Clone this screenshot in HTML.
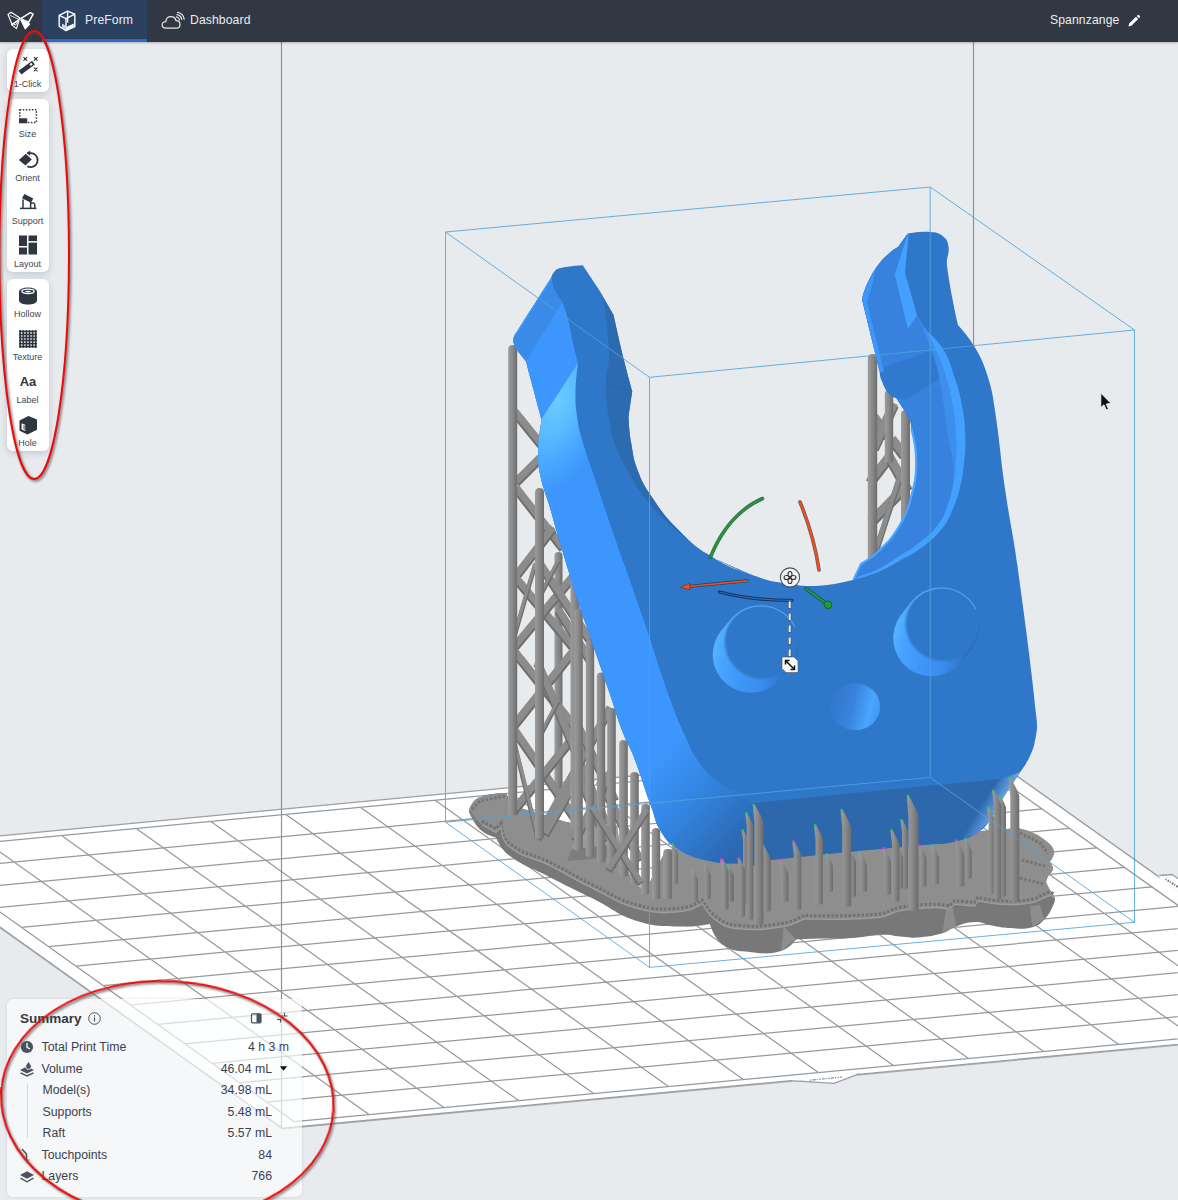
<!DOCTYPE html><html><head><meta charset="utf-8"><title>PreForm</title><style>
*{box-sizing:border-box;margin:0;padding:0}
html,body{width:1178px;height:1200px;overflow:hidden}
body{background:#e8ebee;font-family:"Liberation Sans",sans-serif;position:relative;color:#3a4250}
#scene{position:absolute;left:0;top:0;width:1178px;height:1200px}
#hdr{position:absolute;left:0;top:0;width:1178px;height:41.5px;background:#323843;box-shadow:0 1px 2px rgba(0,0,0,.25)}
#hdr .tab{position:absolute;left:42px;top:0;width:105px;height:41.5px;background:#2c4060;border-bottom:3px solid #2f68d2}
#hdr .t{position:absolute;top:13px;font-size:12.2px;line-height:15px;color:#e9ecf0;letter-spacing:.1px;white-space:nowrap}
.tb{position:absolute;left:6.5px;width:42.5px;background:#fff;border-radius:6px;box-shadow:0 2px 7px rgba(40,50,60,.2)}
.tl{position:absolute;left:-9px;width:60px;text-align:center;font-size:9px;line-height:10px;color:#3d4552;white-space:nowrap}
.ti{position:absolute;left:0;width:42px}
#sum{position:absolute;left:7px;top:999px;width:295px;height:198px;background:rgba(252,253,253,.66);border-radius:6px;box-shadow:0 0 3px rgba(60,70,80,.15)}
#sum .h{position:absolute;left:13px;top:12px;font-size:13.5px;font-weight:bold;color:#333a45;line-height:16px}
#sum .r{position:absolute;left:0;width:295px;height:20px;font-size:12.3px;line-height:20px;color:#3a4250}
#sum .r .l{position:absolute;left:34.5px;top:0;white-space:nowrap}
#sum .r .l2{position:absolute;left:35.5px;top:0;white-space:nowrap}
#sum .r .v{position:absolute;right:30px;top:0;white-space:nowrap}
#sum .r .ic{position:absolute;left:12px;top:2px;width:16px;height:16px}
#ann{position:absolute;left:0;top:0;width:1178px;height:1200px;pointer-events:none}
</style></head><body><svg id="scene" viewBox="0 0 1178 1200">
<defs><linearGradient id="gp" x1="0" x2="1" y1="0" y2="0"><stop offset="0" stop-color="#9c9c9c"/><stop offset=".45" stop-color="#8b8b8b"/><stop offset="1" stop-color="#6c6c6c"/></linearGradient></defs>
<polygon points="-113.1,846.6 282.4,1128.3 1370,1026.4 1370,1027.7 282.4,1129.6 -113.1,847.9" fill="#b3b6bb" />
<polygon points="-113.1,846.6 971.5,743.9 1370,1026.4 282.4,1128.3" fill="#ffffff" />
<polyline points="-113.1,846.6 971.5,743.9 1370,1026.4 282.4,1128.3 -113.1,846.6" fill="none" stroke="#9b9ea4" stroke-width="1.4" />
<polygon points="789.4,1079.5 834.2,1083.3 859.6,1072.6" fill="#ffffff" />
<polyline points="792,1080.2 857,1073.9" fill="none" stroke="#ffffff" stroke-width="2.6" />
<polyline points="789.4,1080.6 834.2,1083.3 859.6,1073.6" fill="none" stroke="#9b9ea4" stroke-width="1.3" />
<polyline points="810,1080.2 842,1077" fill="none" stroke="#555" stroke-width="1.1" stroke-dasharray="1.5 1.2 3 1 1 1.5" stroke-opacity=".8"/>
<polygon points="1158.5,876 1172,874.5 1179,879.2 1179,892 1160,878" fill="#ffffff" />
<polyline points="1161,877.8 1179,889.8" fill="none" stroke="#ffffff" stroke-width="3" />
<polyline points="1159.3,875.5 1172,874.5 1179,879.2" fill="none" stroke="#9b9ea4" stroke-width="1.3" />
<polyline points="1165.5,879 1178,887" fill="none" stroke="#444" stroke-width="2" stroke-dasharray="1 1.4 1.8 1" stroke-opacity=".75"/>
<path d="M-87.6 849.7L294.3 1121.7M-87.6 849.7L959.6 750.5M-13.1 842.6L369 1114.6M-60.4 869.1L987 770M61.5 835.6L443.8 1107.6M-33.2 888.5L1014.5 789.4M136.2 828.5L518.7 1100.6M-5.9 907.9L1041.9 808.9M210.9 821.4L593.6 1093.6M21.4 927.3L1069.4 828.4M285.6 814.3L668.5 1086.6M48.6 946.7L1096.8 847.8M360.3 807.3L743.4 1079.6M75.9 966.1L1124.3 867.3M435.1 800.2L818.4 1072.5M103.2 985.6L1151.8 886.8M509.9 793.1L893.4 1065.5M130.5 1005L1179.3 906.3M584.8 786L968.5 1058.5M157.7 1024.4L1206.8 925.8M659.7 778.9L1043.6 1051.4M185 1043.9L1234.2 945.2M734.6 771.8L1118.7 1044.4M212.3 1063.3L1261.7 964.7M809.6 764.7L1193.8 1037.3M239.6 1082.8L1289.2 984.2M884.6 757.6L1269 1030.3M267 1102.2L1316.8 1003.7M959.6 750.5L1344.3 1023.3M294.3 1121.7L1344.3 1023.3" fill="none" stroke="#96999f" stroke-width="1.25"/>
<path d="M281.5 41 V1127.5" stroke="#8f9398" stroke-width="1.2"/><path d="M973.5 41 V348" stroke="#8f9398" stroke-width="1.2"/>
<path d="M469.3 809.5C469.3 809.5 472.1 800.7 478 798C489.7 792.8 506 793 506 793C506 793 513 806 513 806C513 806 530.6 810.9 545 815C557.2 818.5 559.5 821 572 823C584.4 825 587.5 822.1 600 824C608 825.2 617 830 617 830C617 830 620 845.7 624 858C627.6 869.1 627.4 872.4 634 882C637.7 887.3 646 890 646 890C646 890 651 880.1 655 872C660 862.1 666 850 666 850C666 850 700 846 700 846C700 846 1000 830 1000 830C1000 830 1015.4 828 1015.4 828C1015.4 828 1023.2 828.9 1029 831.3C1036.3 834.3 1038 835 1044.3 839.8C1049.2 843.6 1051.2 844.3 1053.6 850C1055.1 853.6 1053.3 854.8 1052 858.5C1051.4 860.3 1049.4 861.9 1049.4 861.9C1049.4 861.9 1053.2 865.3 1052.8 868.7C1052.3 873.1 1049.7 873.1 1047.7 877C1046.6 879.1 1046 882 1046 882C1046 882 1047.7 885.9 1049.4 889C1051.5 892.9 1053.3 893.2 1054.5 897.5C1055.3 900.5 1054.9 901.5 1053.6 904.3C1050.2 911.6 1049.8 913.7 1044.3 919.6C1040 924.3 1038.6 925.7 1032.4 927.2C1022 929.7 1019.4 928.4 1008.7 928C1001 927.7 999.3 926.8 991.7 925.5C984 924.1 982.5 921.8 974.7 922C966.1 922.2 964.2 923.6 956 926.4C949.5 928.6 949 931.3 942.4 933.2C931.2 936.3 928.5 936.5 917 937.4C909.4 938 907.6 937.3 900 936.6C892.3 935.9 890.7 934.3 883 934.5C869 934.9 866 937.1 852 938C836.7 939 833.3 938.2 818 938.6C808.1 938.9 796 939.5 796 939.5C796 939.5 789.2 948.8 781 951C767.5 954.7 763.9 953.5 750 952C737.3 950.6 733.1 951.8 722.7 944.5C713.8 938.3 710 924 710 924C710 924 696 927 684.5 926.6C663.7 925.9 658.5 927.6 638.6 921.5C616.6 914.8 613.4 908.9 592.8 898.6C572.2 888.3 567.5 886.3 547 875.7C529.7 866.8 524.4 867 508.8 855.3C500.9 849.4 496 837.5 496 837.5C496 837.5 486.3 835.3 480.7 830C473.7 823.4 469 812 469 812C469 812 469.3 809.5 469.3 809.5Z" fill="#787878" />
<path d="M469.3 809.5C469.3 809.5 472.1 800.7 478 798C489.7 792.8 506 793 506 793C506 793 513 806 513 806C513 806 530.6 810.9 545 815C557.2 818.5 559.5 821 572 823C584.4 825 587.5 822.1 600 824C608 825.2 617 830 617 830C617 830 620 845.7 624 858C627.6 869.1 627.4 872.4 634 882C637.7 887.3 646 890 646 890C646 890 651 880.1 655 872C660 862.1 666 850 666 850C666 850 700 846 700 846C700 846 1000 830 1000 830C1000 830 1015.4 828 1015.4 828C1015.4 828 1023.2 828.9 1029 831.3C1036.3 834.3 1038 835 1044.3 839.8C1049.2 843.6 1051.2 844.3 1053.6 850C1055.1 853.6 1053.3 854.8 1052 858.5C1051.4 860.3 1049.4 861.9 1049.4 861.9C1049.4 861.9 1053.2 865.3 1052.8 868.7C1052.3 873.1 1049.7 873.1 1047.7 877C1046.6 879.1 1046 882 1046 882C1046 882 1047.7 885.9 1049.4 889C1051.5 892.9 1052.8 894.7 1054.5 897.5C1054.5 897.5 1054.5 897.5 1054.5 897.5C1054.5 897.5 1051.8 895.3 1049.4 895.8C1042 897.5 1040.5 901.1 1032.4 902.6C1018.9 905 1015.6 904.7 1001.9 904.3C991 904 978 901 978 901C978 901 974.7 906 974.7 906C974.7 906 954.3 904.3 954.3 904.3C954.3 904.3 949.2 909.4 949.2 909.4C949.2 909.4 940.9 907.5 934 907.7C918.6 908.2 915.1 908.3 900 911C889.8 912.8 888.3 916.8 877.9 917.7C845.9 920.4 804 919 804 919C804 919 793.3 925.1 783.7 926.6C764.2 929.6 759.6 930.5 740 929C729.4 928.2 726.4 927.4 717.6 921.5C708.8 915.6 702.3 903.7 702.3 903.7C702.3 903.7 691.7 910.6 682 911.4C662.5 913 657.5 913.7 638.6 908.8C616.8 903.2 613.1 898.3 592.8 888.4C573 878.8 569.2 875.4 549.5 865.5C531.4 856.5 524.6 859 508.8 846.4C501.4 840.5 501 827 501 827C501 827 496 832.4 496 832.4C496 832.4 487.4 829.5 482 824.8C475.2 819 469.3 809.5 469.3 809.5Z" fill="#8e8e8e" />
<path d="M482 824.8C482 824.8 496 832.4 496 832.4C496 832.4 501 827 501 827C501 827 501.4 840.5 508.8 846.4C524.6 859 531.4 856.5 549.5 865.5C569.2 875.4 573 878.8 592.8 888.4C613.1 898.3 616.8 903.2 638.6 908.8C657.5 913.7 662.5 913 682 911.4C691.7 910.6 702.3 903.7 702.3 903.7C702.3 903.7 708.8 915.6 717.6 921.5C726.4 927.4 729.4 928.2 740 929C759.6 930.5 764.2 929.6 783.7 926.6C793.3 925.1 804 919 804 919C804 919 845.9 920.4 877.9 917.7C888.3 916.8 889.8 912.8 900 911C915.1 908.3 918.6 908.2 934 907.7C940.9 907.5 949.2 909.4 949.2 909.4C949.2 909.4 954.3 904.3 954.3 904.3C954.3 904.3 974.7 906 974.7 906C974.7 906 978 901 978 901C978 901 991 904 1001.9 904.3C1015.6 904.7 1018.9 905 1032.4 902.6C1040.5 901.1 1042 897.5 1049.4 895.8C1051.8 895.3 1054.5 897.5 1054.5 897.5" fill="none" stroke="#6a6a6a" stroke-width="3" stroke-dasharray="2.5 1.8" stroke-opacity=".8" transform="translate(0,-3.5)"/>
<path d="M482 824.8C482 824.8 496 832.4 496 832.4C496 832.4 501 827 501 827C501 827 501.4 840.5 508.8 846.4C524.6 859 531.4 856.5 549.5 865.5C569.2 875.4 573 878.8 592.8 888.4C613.1 898.3 616.8 903.2 638.6 908.8C657.5 913.7 662.5 913 682 911.4C691.7 910.6 702.3 903.7 702.3 903.7C702.3 903.7 708.8 915.6 717.6 921.5C726.4 927.4 729.4 928.2 740 929C759.6 930.5 764.2 929.6 783.7 926.6C793.3 925.1 804 919 804 919C804 919 845.9 920.4 877.9 917.7C888.3 916.8 889.8 912.8 900 911C915.1 908.3 918.6 908.2 934 907.7C940.9 907.5 949.2 909.4 949.2 909.4C949.2 909.4 954.3 904.3 954.3 904.3C954.3 904.3 974.7 906 974.7 906C974.7 906 978 901 978 901C978 901 991 904 1001.9 904.3C1015.6 904.7 1018.9 905 1032.4 902.6C1040.5 901.1 1042 897.5 1049.4 895.8C1051.8 895.3 1054.5 897.5 1054.5 897.5" fill="none" stroke="#a2a2a2" stroke-width="1.2" stroke-opacity=".9"/>
<polyline points="472,809 480,801 505,796" fill="none" stroke="#6a6a6a" stroke-width="3" stroke-dasharray="2.5 1.8" stroke-opacity=".7"/>
<polyline points="1020,833 1040,843 1048,853" fill="none" stroke="#6a6a6a" stroke-width="3" stroke-dasharray="2.5 1.8" stroke-opacity=".7"/>
<polyline points="1022,860 1045,866" fill="none" stroke="#6a6a6a" stroke-width="3" stroke-dasharray="2.5 1.8" stroke-opacity=".7"/>
<polyline points="1020,878 1043,884" fill="none" stroke="#6a6a6a" stroke-width="3" stroke-dasharray="2.5 1.8" stroke-opacity=".7"/>
<polygon points="796,939.5 781,951 783.7,926.6" fill="#8d8d8d" />
<polygon points="1032.4,927.2 1044.3,919.6 1040,905 1030,906" fill="#8d8d8d" />
<polygon points="942.4,933.2 956,926.4 953,908 946,910" fill="#8d8d8d" />
<polygon points="572,849 620,844 626,856 567,861" fill="#7d7d7d" />
<polygon points="577,828 617,825 620,844 572,849" fill="#9b9b9b" />
<path d="M874 418.2L888 437.2" stroke="#6e6e6e" stroke-width="10" stroke-linecap="butt"/><path d="M874 416.2L888 435.2" stroke="#8c8c8c" stroke-width="8.5" stroke-linecap="butt"/>
<path d="M894 405.2L874 449.2" stroke="#6e6e6e" stroke-width="10" stroke-linecap="butt"/><path d="M894 403.2L874 447.2" stroke="#8c8c8c" stroke-width="8.5" stroke-linecap="butt"/>
<path d="M890 457.2L870 483.2" stroke="#6e6e6e" stroke-width="10" stroke-linecap="butt"/><path d="M890 455.2L870 481.2" stroke="#8c8c8c" stroke-width="8.5" stroke-linecap="butt"/>
<path d="M889 457.2L908 491.2" stroke="#6e6e6e" stroke-width="10" stroke-linecap="butt"/><path d="M889 455.2L908 489.2" stroke="#8c8c8c" stroke-width="8.5" stroke-linecap="butt"/>
<path d="M906 487.2L871 523.2" stroke="#6e6e6e" stroke-width="10" stroke-linecap="butt"/><path d="M906 485.2L871 521.2" stroke="#8c8c8c" stroke-width="8.5" stroke-linecap="butt"/>
<path d="M892 440.2L904 456.2" stroke="#6e6e6e" stroke-width="10" stroke-linecap="butt"/><path d="M892 438.2L904 454.2" stroke="#8c8c8c" stroke-width="8.5" stroke-linecap="butt"/>
<path d="M900 477.2L876 551.2" stroke="#6e6e6e" stroke-width="6" stroke-linecap="butt"/><path d="M900 475.2L876 549.2" stroke="#8c8c8c" stroke-width="4.5" stroke-linecap="butt"/>
<path d="M867.8 600 V358.8 Q867.8 354 872.5 354 Q877.2 354 877.2 358.8 V600 Q872.5 602 867.8 600Z" fill="url(#gp)"/>
<path d="M884.8 462 V394.2 Q884.8 390 889 390 Q893.2 390 893.2 394.2 V462 Q889 464 884.8 462Z" fill="url(#gp)"/>
<path d="M901 560 V414.5 Q901 410 905.5 410 Q910 410 910 414.5 V560 Q905.5 562 901 560Z" fill="url(#gp)"/>
<path d="M554.5 812 V556 Q554.5 552 558.5 552 Q562.5 552 562.5 556 V812 Q558.5 814 554.5 812Z" fill="url(#gp)"/>
<path d="M515 413.2L541 445.2" stroke="#6e6e6e" stroke-width="8.6" stroke-linecap="butt"/><path d="M515 411.2L541 443.2" stroke="#8c8c8c" stroke-width="7.1" stroke-linecap="butt"/>
<path d="M540 459.2L516 483.2" stroke="#6e6e6e" stroke-width="8.6" stroke-linecap="butt"/><path d="M540 457.2L516 481.2" stroke="#8c8c8c" stroke-width="7.1" stroke-linecap="butt"/>
<path d="M516 489.2L563 549.2" stroke="#6e6e6e" stroke-width="8.6" stroke-linecap="butt"/><path d="M516 487.2L563 547.2" stroke="#8c8c8c" stroke-width="7.1" stroke-linecap="butt"/>
<path d="M553 529.2L516 577.2" stroke="#6e6e6e" stroke-width="8.6" stroke-linecap="butt"/><path d="M553 527.2L516 575.2" stroke="#8c8c8c" stroke-width="7.1" stroke-linecap="butt"/>
<path d="M512.6 575.2L575 650.2" stroke="#6e6e6e" stroke-width="8.6" stroke-linecap="butt"/><path d="M512.6 573.2L575 648.2" stroke="#8c8c8c" stroke-width="7.1" stroke-linecap="butt"/>
<path d="M512.6 650.2L575 575.2" stroke="#6e6e6e" stroke-width="8.6" stroke-linecap="butt"/><path d="M512.6 648.2L575 573.2" stroke="#8c8c8c" stroke-width="7.1" stroke-linecap="butt"/>
<path d="M512.6 650.2L575 728.2" stroke="#6e6e6e" stroke-width="8.6" stroke-linecap="butt"/><path d="M512.6 648.2L575 726.2" stroke="#8c8c8c" stroke-width="7.1" stroke-linecap="butt"/>
<path d="M512.6 728.2L575 650.2" stroke="#6e6e6e" stroke-width="8.6" stroke-linecap="butt"/><path d="M512.6 726.2L575 648.2" stroke="#8c8c8c" stroke-width="7.1" stroke-linecap="butt"/>
<path d="M512.6 728.2L581 828.2" stroke="#6e6e6e" stroke-width="8.6" stroke-linecap="butt"/><path d="M512.6 726.2L581 826.2" stroke="#8c8c8c" stroke-width="7.1" stroke-linecap="butt"/>
<path d="M512.6 813.2L575 736.2" stroke="#6e6e6e" stroke-width="8.6" stroke-linecap="butt"/><path d="M512.6 811.2L575 734.2" stroke="#8c8c8c" stroke-width="7.1" stroke-linecap="butt"/>
<path d="M537.5 561.2L590 641.2" stroke="#6e6e6e" stroke-width="8.6" stroke-linecap="butt"/><path d="M537.5 559.2L590 639.2" stroke="#8c8c8c" stroke-width="7.1" stroke-linecap="butt"/>
<path d="M537.5 663.2L606 824.2" stroke="#6e6e6e" stroke-width="8.6" stroke-linecap="butt"/><path d="M537.5 661.2L606 822.2" stroke="#8c8c8c" stroke-width="7.1" stroke-linecap="butt"/>
<path d="M537.5 839.2L610 709.2" stroke="#6e6e6e" stroke-width="8.6" stroke-linecap="butt"/><path d="M537.5 837.2L610 707.2" stroke="#8c8c8c" stroke-width="7.1" stroke-linecap="butt"/>
<path d="M545 835.2L577 779.2" stroke="#6e6e6e" stroke-width="8.6" stroke-linecap="butt"/><path d="M545 833.2L577 777.2" stroke="#8c8c8c" stroke-width="7.1" stroke-linecap="butt"/>
<path d="M575 721.2L615 801.2" stroke="#6e6e6e" stroke-width="8.6" stroke-linecap="butt"/><path d="M575 719.2L615 799.2" stroke="#8c8c8c" stroke-width="7.1" stroke-linecap="butt"/>
<path d="M579 777.2L607 841.2" stroke="#6e6e6e" stroke-width="8.6" stroke-linecap="butt"/><path d="M579 775.2L607 839.2" stroke="#8c8c8c" stroke-width="7.1" stroke-linecap="butt"/>
<path d="M558.5 611.2L590 661.2" stroke="#6e6e6e" stroke-width="8.6" stroke-linecap="butt"/><path d="M558.5 609.2L590 659.2" stroke="#8c8c8c" stroke-width="7.1" stroke-linecap="butt"/>
<path d="M600 781.2L640 861.2" stroke="#6e6e6e" stroke-width="8.6" stroke-linecap="butt"/><path d="M600 779.2L640 859.2" stroke="#8c8c8c" stroke-width="7.1" stroke-linecap="butt"/>
<path d="M575 841.2L612 771.2" stroke="#6e6e6e" stroke-width="8.6" stroke-linecap="butt"/><path d="M575 839.2L612 769.2" stroke="#8c8c8c" stroke-width="7.1" stroke-linecap="butt"/>
<path d="M535 565.2L513 641.2" stroke="#6e6e6e" stroke-width="4.5" stroke-linecap="butt"/><path d="M535 563.2L513 639.2" stroke="#8c8c8c" stroke-width="3" stroke-linecap="butt"/>
<path d="M512.6 736.2L537.5 837.2" stroke="#6e6e6e" stroke-width="4.5" stroke-linecap="butt"/><path d="M512.6 734.2L537.5 835.2" stroke="#8c8c8c" stroke-width="3" stroke-linecap="butt"/>
<path d="M537.5 601.2L558.5 561.2" stroke="#6e6e6e" stroke-width="4.5" stroke-linecap="butt"/><path d="M537.5 599.2L558.5 559.2" stroke="#8c8c8c" stroke-width="3" stroke-linecap="butt"/>
<path d="M558.5 701.2L537.5 741.2" stroke="#6e6e6e" stroke-width="4.5" stroke-linecap="butt"/><path d="M558.5 699.2L537.5 739.2" stroke="#8c8c8c" stroke-width="3" stroke-linecap="butt"/>
<path d="M508.2 815 V349.5 Q508.2 345 512.7 345 Q517.2 345 517.2 349.5 V815 Q512.7 817 508.2 815Z" fill="url(#gp)"/>
<path d="M535 838 V492.5 Q535 488 539.5 488 Q544 488 544 492.5 V838 Q539.5 840 535 838Z" fill="url(#gp)"/>
<path d="M570.5 830 V582.5 Q570.5 578 575 578 Q579.5 578 579.5 582.5 V830 Q575 832 570.5 830Z" fill="url(#gp)"/>
<path d="M574.2 850 V613.2 Q574.2 609 578.5 609 Q582.8 609 582.8 613.2 V850 Q578.5 852 574.2 850Z" fill="url(#gp)"/>
<path d="M585.8 856 V644.2 Q585.8 640 590 640 Q594.2 640 594.2 644.2 V856 Q590 858 585.8 856Z" fill="url(#gp)"/>
<path d="M596.8 862 V676.8 Q596.8 672.5 601 672.5 Q605.2 672.5 605.2 676.8 V862 Q601 864 596.8 862Z" fill="url(#gp)"/>
<path d="M607.2 868 V712.2 Q607.2 708 611.5 708 Q615.8 708 615.8 712.2 V868 Q611.5 870 607.2 868Z" fill="url(#gp)"/>
<path d="M619.2 876 V744.2 Q619.2 740 623.5 740 Q627.8 740 627.8 744.2 V876 Q623.5 878 619.2 876Z" fill="url(#gp)"/>
<path d="M630.2 884 V776.2 Q630.2 772 634.5 772 Q638.8 772 638.8 776.2 V884 Q634.5 886 630.2 884Z" fill="url(#gp)"/>
<path d="M641.2 893.5 V808.2 Q641.2 804 645.5 804 Q649.8 804 649.8 808.2 V893.5 Q645.5 895.5 641.2 893.5Z" fill="url(#gp)"/>
<path d="M651.8 898.6 V832.2 Q651.8 828 656 828 Q660.2 828 660.2 832.2 V898.6 Q656 900.6 651.8 898.6Z" fill="url(#gp)"/>
<path d="M663.2 898.6 V853.2 Q663.2 849 667.5 849 Q671.8 849 671.8 853.2 V898.6 Q667.5 900.6 663.2 898.6Z" fill="url(#gp)"/>
<path d="M592 808.2L641 884.2" stroke="#6e6e6e" stroke-width="7" stroke-linecap="butt"/><path d="M592 806.2L641 882.2" stroke="#8c8c8c" stroke-width="5.5" stroke-linecap="butt"/>
<path d="M608.5 871.2L646.5 811.2" stroke="#6e6e6e" stroke-width="7" stroke-linecap="butt"/><path d="M608.5 869.2L646.5 809.2" stroke="#8c8c8c" stroke-width="5.5" stroke-linecap="butt"/>
<defs><radialGradient id="gHi" gradientUnits="userSpaceOnUse" cx="558" cy="402" r="100" gradientTransform="rotate(21 558 402) translate(558 402) scale(.55 1) translate(-558 -402)"><stop offset="0" stop-color="#6accff"/><stop offset=".35" stop-color="#5abaff"/><stop offset=".7" stop-color="#47a5ff"/><stop offset="1" stop-color="#3d96fb"/></radialGradient><linearGradient id="gCorner" gradientUnits="userSpaceOnUse" x1="650" y1="770" x2="735" y2="850"><stop offset="0" stop-color="#3d96fb"/><stop offset=".45" stop-color="#3384e0"/><stop offset="1" stop-color="#2b68b0"/></linearGradient><linearGradient id="gCornerR" gradientUnits="userSpaceOnUse" x1="1003" y1="806" x2="986" y2="796"><stop offset="0" stop-color="#78abe2"/><stop offset=".3" stop-color="#5f97d8"/><stop offset=".65" stop-color="#4380c8"/><stop offset="1" stop-color="#2d68ad"/></linearGradient><linearGradient id="gSm" gradientUnits="userSpaceOnUse" x1="830" y1="700" x2="880" y2="712"><stop offset="0" stop-color="#3277ca"/><stop offset=".45" stop-color="#3883dc"/><stop offset=".8" stop-color="#4aa6ff"/><stop offset="1" stop-color="#3f98f6"/></linearGradient></defs>
<path d="M551 278C551 278 514.5 335.5 514.5 335.5C514.5 335.5 512.9 338.5 513.2 341C513.6 344.8 516 349 516 349C516 349 526 361.5 526 361.5C526 361.5 541.7 420 541.7 420C541.7 420 538.8 434.8 538.4 447C538 458.7 537.6 461.5 539.8 473C543.1 490 545.9 493.3 550.7 510C553.2 518.5 553.5 520.5 556 529C560.9 545.7 562 549.4 567 566C571.6 581.3 572.5 584.8 577.5 600C582.4 615.2 583.8 618.4 589 633.5C598.2 660.3 600.3 666.2 609.5 693C615.5 710.5 616.1 714.7 622.7 732C626.9 743.1 629.3 744.9 633.5 756C642.2 778.7 643 784.2 651.4 807C655.6 818.5 654.8 822.1 661.5 832.4C667.7 841.9 669.8 844.1 679.4 850C690.9 857 694.3 857.5 707.4 860.4C721.8 863.6 725.3 863.6 740 863.5C754 863.4 757 861.5 771 860C805.3 856.3 812.9 855.4 847.3 852C881.7 848.6 889.3 848.3 923.7 845C937.8 843.6 941.2 844.7 955 841.5C965.6 839 968.2 838.2 977.5 832.5C984 828.5 985 826.7 989.5 820.5C997.3 809.7 997.4 806.2 1004.5 795C1010.2 786 1012.2 784.4 1018 775.5C1023.6 766.9 1025.6 765.3 1030 756C1033.6 748.3 1034 746.3 1035.5 738C1037 730 1037.5 728.1 1036.7 720C1030.7 663 1027 635.7 1017.6 567C1013 533.1 1010.4 525.8 1005.5 492C1000 454.3 1000.4 445.7 994.6 408C992.5 394.1 992.3 390.8 988 377.4C983.5 363.4 982.3 360.2 975 347.5C968.7 336.5 958 325 958 325C958 325 950.2 291.5 947 265.4C946 257 949.6 255.1 948.5 246.7C947.8 241.5 947.3 239.7 943.2 236.4C938.4 232.5 936.4 232.5 930.2 232C920.1 231.2 907.8 233.6 907.8 233.6C907.8 233.6 898.4 246.7 898.4 246.7C898.4 246.7 893.4 249.4 890 252.5C884.4 257.5 883 258.5 878.5 264.5C873.3 271.4 872.4 273.3 868.5 281C865.4 287 865.1 288.7 863 295C862.3 297.2 862.2 300 862.2 300C862.2 300 879.8 371.8 879.8 371.8C879.8 371.8 879.6 376.8 881.6 380C886.5 387.9 889 388.6 894.7 396C897.4 399.6 897.9 400.5 900.3 404.3C904.6 411.3 906.2 412.5 909.6 420C911.3 423.6 910.9 424.7 911.5 428.6C913.7 442 916.2 445.9 916.2 460.3C916.2 476.4 915.6 480.2 911.5 495.8C907.5 510.7 906.3 514.3 898.4 527.5C891 539.8 888.1 541.8 877.9 551.8C871.2 558.4 861 564 861 564C861 564 853.6 579.8 853.6 579.8C853.6 579.8 836.4 584.5 822 585.5C808.1 586.5 804.8 586.2 791 584.2C773.5 581.6 769.4 581.2 752.8 575.3C732.6 568.2 727.7 566.8 709.5 555.5C692.8 545.1 689.8 541.5 676 527.5C663.5 514.8 661.4 511.3 651.5 496.5C644 485.3 642.2 482.6 637.5 470C632.9 457.9 633.2 454.7 631 442C629.1 431 628.5 417.4 628.5 417.4C628.5 417.4 632.2 391.3 632.2 391.3C632.2 391.3 627.3 373.9 623.8 359.5C618.9 339.4 613.5 314.7 613.5 314.7C613.5 314.7 599.5 290.4 599.5 290.4C599.5 290.4 582.7 265.2 582.7 265.2C582.7 265.2 569.7 265.9 560.3 268C557.3 268.7 556.6 269.3 554.5 271.5C552.2 273.9 551 278 551 278Z" fill="#2e77c9" />
<path d="M551 278C551 278 514.5 335.5 514.5 335.5C514.5 335.5 512.9 338.5 513.2 341C513.6 344.8 516 349 516 349C516 349 526 361.5 526 361.5C526 361.5 541.7 420 541.7 420C541.7 420 538.8 434.8 538.4 447C538 458.7 537.6 461.5 539.8 473C543.1 490 545.9 493.3 550.7 510C553.2 518.5 553.5 520.5 556 529C560.9 545.7 562 549.4 567 566C571.6 581.3 572.5 584.8 577.5 600C582.4 615.2 583.8 618.4 589 633.5C598.2 660.3 600.3 666.2 609.5 693C615.5 710.5 616.1 714.7 622.7 732C626.9 743.1 629.3 744.9 633.5 756C642.2 778.7 643 784.2 651.4 807C655.6 818.5 654.8 822.1 661.5 832.4C667.7 841.9 669.8 844.1 679.4 850C690.9 857 694.3 857.5 707.4 860.4C721.8 863.6 725.3 863.6 740 863.5C754 863.4 768.1 873.7 771 860C775.3 839.8 753 803 753 803C753 803 746.2 797.6 740 794C731.3 789 728 790 720 784C709.7 776.2 707.3 774.2 699.7 763.7C691.1 751.9 690.6 748.3 684.5 735C677.4 719.6 676.1 716 670.4 700C657.4 663.3 655.6 654.8 643 618C635.1 595 633.1 590 625 567C617 544.2 615.1 539.2 607.3 516.4C601.4 499.2 600.2 495.3 594.5 478C588.8 460.9 587 457.3 582 440C579.1 430 578.5 427.7 577.1 417.4C575.5 406.1 575.2 403.5 575.4 392C575.6 379 578 363.2 578 363.2C578 363.2 575.3 353 573.4 344.6C570.7 332.8 570.8 330.1 567.8 318.4C565.8 310.7 562.2 301.6 562.2 301.6C562.2 301.6 556.5 295 553.8 288.6C551.8 283.9 551.9 277.3 551.9 277.3C551.9 277.3 551 278 551 278Z" fill="#3d96fb" />
<clipPath id="cSide"><path d="M551 278C551 278 514.5 335.5 514.5 335.5C514.5 335.5 512.9 338.5 513.2 341C513.6 344.8 516 349 516 349C516 349 526 361.5 526 361.5C526 361.5 541.7 420 541.7 420C541.7 420 538.8 434.8 538.4 447C538 458.7 537.6 461.5 539.8 473C543.1 490 545.9 493.3 550.7 510C553.2 518.5 553.5 520.5 556 529C560.9 545.7 562 549.4 567 566C571.6 581.3 572.5 584.8 577.5 600C582.4 615.2 583.8 618.4 589 633.5C598.2 660.3 600.3 666.2 609.5 693C615.5 710.5 616.1 714.7 622.7 732C626.9 743.1 629.3 744.9 633.5 756C642.2 778.7 643 784.2 651.4 807C655.6 818.5 654.8 822.1 661.5 832.4C667.7 841.9 669.8 844.1 679.4 850C690.9 857 694.3 857.5 707.4 860.4C721.8 863.6 725.3 863.6 740 863.5C754 863.4 768.1 873.7 771 860C775.3 839.8 753 803 753 803C753 803 746.2 797.6 740 794C731.3 789 728 790 720 784C709.7 776.2 707.3 774.2 699.7 763.7C691.1 751.9 690.6 748.3 684.5 735C677.4 719.6 676.1 716 670.4 700C657.4 663.3 655.6 654.8 643 618C635.1 595 633.1 590 625 567C617 544.2 615.1 539.2 607.3 516.4C601.4 499.2 600.2 495.3 594.5 478C588.8 460.9 587 457.3 582 440C579.1 430 578.5 427.7 577.1 417.4C575.5 406.1 575.2 403.5 575.4 392C575.6 379 578 363.2 578 363.2C578 363.2 575.3 353 573.4 344.6C570.7 332.8 570.8 330.1 567.8 318.4C565.8 310.7 562.2 301.6 562.2 301.6C562.2 301.6 556.5 295 553.8 288.6C551.8 283.9 551.9 277.3 551.9 277.3C551.9 277.3 551 278 551 278Z"/></clipPath><g clip-path="url(#cSide)">
<polygon points="551,278 514.5,335.5 513.2,341 516,349 526.7,360 562.2,302.5 553.8,288.6" fill="#3a8ae8" />
<polyline points="550,279.5 514.8,335" fill="none" stroke="#48a6ff" stroke-width="1.6" />
<path d="M578 363.2C578 363.2 541.6 419.3 541.6 419.3C541.6 419.3 530 447 530 447C530 447 530 473 530 473C530 473 540 510 540 510C540 510 550 529 550 529C550 529 575 600 575 600C575 600 640 590 640 590C640 590 620 400 620 400C620 400 590 370 590 370C590 370 578 363.2 578 363.2Z" fill="url(#gHi)" />
<path d="M610 715C610 715 620 756 620 756C620 756 640 810 640 810C640 810 655 840 655 840C655 840 675 860 675 860C675 860 705 870 705 870C705 870 740 873 740 873C740 873 780 870 780 870C780 870 760 790 760 790C760 790 700 700 700 700C700 700 610 715 610 715Z" fill="url(#gCorner)" />
</g>
<path d="M753 803C753 803 771 860 771 860C771 860 812.9 855.4 847.3 852C881.7 848.6 889.3 848.3 923.7 845C937.8 843.6 941.2 844.7 955 841.5C965.6 839 968.2 838.2 977.5 832.5C984 828.5 985 826.7 989.5 820.5C997.3 809.7 997.4 806.2 1004.5 795C1010.2 786 1018 775.5 1018 775.5C1018 775.5 1008.2 778.1 1000 779C971.1 782.3 962.3 782.5 931.4 785.5C894.8 789 886.6 789.9 850 793.5C806.4 797.8 753 803 753 803Z" fill="#2d68ad" />
<polygon points="1020,772 1013,783 1004.5,796 989.5,821 977.5,833 962,839.5 952,835 966,825 978,810 990,791 1001,778.5" fill="url(#gCornerR)" />
<path d="M603 296C603 296 608.2 326.9 609 352.5C609.5 367.6 605.9 370.9 605.9 386C605.9 401.4 606.7 404.8 609.2 420C611.2 432.4 611.6 435.3 616 447C620.8 459.7 622.7 462.3 629.5 474C636.9 486.6 638.2 489.8 647.5 501C659.2 515.1 662.3 517.9 676 530C690.5 542.9 710 556.5 710 556.5C710 556.5 752.8 575.3 752.8 575.3C752.8 575.3 727.7 566.8 709.5 555.5C692.8 545.1 689.8 541.5 676 527.5C663.5 514.8 661.4 511.3 651.5 496.5C644 485.3 642.2 482.6 637.5 470C632.9 457.9 633.2 454.7 631 442C629.1 431 628.5 417.4 628.5 417.4C628.5 417.4 632.2 391.3 632.2 391.3C632.2 391.3 627.3 373.9 623.8 359.5C618.9 339.4 613.5 314.7 613.5 314.7C613.5 314.7 599.5 290.4 599.5 290.4C599.5 290.4 603 296 603 296Z" fill="#2c6bb0" />
<polyline points="607,383.8 632.2,391.3" fill="none" stroke="#2a64a6" stroke-width="1" />
<path d="M917.1 315.8C917.1 315.8 907.8 328.9 907.8 328.9C907.8 328.9 894.7 274.7 894.7 274.7C894.7 274.7 907.8 233.6 907.8 233.6C907.8 233.6 898.4 246.7 898.4 246.7C898.4 246.7 893.4 249.4 890 252.5C884.4 257.5 883 258.5 878.5 264.5C873.3 271.4 872.4 273.3 868.5 281C865.4 287 865.1 288.7 863 295C862.3 297.2 862.2 300 862.2 300C862.2 300 879.8 371.8 879.8 371.8C879.8 371.8 881.6 380 881.6 380C881.6 380 889 388.6 894.7 396C897.4 399.6 897.9 400.5 900.3 404.3C904.6 411.3 906.2 412.5 909.6 420C911.3 423.6 910.9 424.7 911.5 428.6C913.7 442 916.2 445.9 916.2 460.3C916.2 476.4 915.6 480.2 911.5 495.8C907.5 510.7 906.3 514.3 898.4 527.5C891 539.8 888.1 541.8 877.9 551.8C871.2 558.4 861 564 861 564C861 564 853.6 579.8 853.6 579.8C853.6 579.8 857.3 578.7 857.3 578.7C857.3 578.7 869.7 575.5 879.3 571.4C888.5 567.5 890.3 565.9 899 561C909 555.4 911.8 554.9 921 548C931.1 540.4 933.7 538.8 941.7 529C948.2 521 948.6 518.4 952.7 509C956.9 499.4 957.5 497.1 960 487C962.4 477.3 962.7 475 963.7 465C965 452 965.6 449.1 965.2 436C964.8 422.2 964.4 419 961.9 405.4C959.6 392.6 958.6 389.8 954.5 377.4C950.2 364.5 950.2 361 943.2 349.4C937.4 339.7 926.4 330.7 926.4 330.7C926.4 330.7 917.1 315.8 917.1 315.8Z" fill="#3782dc" />
<path d="M879.8 369C879.8 369 926 352 926 352C926 352 943.2 349.4 943.2 349.4C943.2 349.4 951.3 359 948 366C941.9 378.9 937.2 380.5 925 388C913.2 395.2 909.6 400.5 896 398C885.8 396.1 881.6 380 881.6 380C881.6 380 879.8 369 879.8 369Z" fill="#3179cf" />
<path d="M917.1 315.8C917.1 315.8 927.6 338.1 934 357.1C938.1 369.2 937.8 372.3 940.3 384.8C942.6 396.1 942.8 398.7 944.5 410.1C946.3 422 946.3 424.7 948.2 436.5C950.1 448.4 951.8 450.9 952.9 462.9C953.8 472.4 953.7 474.7 952.5 484.2C951.3 494.2 951 496.5 947.5 506C944.1 515.2 943.5 517.7 937.5 525.5C930 535.1 927.4 536.5 917.9 544.1C909.2 551 906.5 551.5 897.1 557.5C888.8 562.7 887.4 564.7 878.5 569C869.2 573.6 857.1 577.2 857.1 577.2C857.1 577.2 857.3 578.7 857.3 578.7C857.3 578.7 869.7 575.5 879.3 571.4C888.5 567.5 890.3 565.9 899 561C909 555.4 911.8 554.9 921 548C931.1 540.4 933.7 538.8 941.7 529C948.2 521 948.6 518.4 952.7 509C956.9 499.4 957.5 497.1 960 487C962.4 477.3 962.7 475 963.7 465C965 452 965.6 449.1 965.2 436C964.8 422.2 964.4 419 961.9 405.4C959.6 392.6 958.6 389.8 954.5 377.4C950.2 364.5 950.2 361 943.2 349.4C937.4 339.7 926.4 330.7 926.4 330.7C926.4 330.7 917.1 315.8 917.1 315.8Z" fill="#3d8fee" />
<path d="M922 322C922 322 931.5 339.2 937.8 353.9C943 365.8 943.8 368.6 947.4 381.1C950.8 392.9 951.3 395.6 953.2 407.8C955.2 420.5 955.6 423.4 956.2 436.3C956.8 448.5 956.5 451.3 955.8 463.5C955.3 473 955.3 475.2 953.4 484.5C951.5 494.4 951.2 496.6 947.5 506C943.9 515.2 943.5 517.7 937.5 525.5C930 535.1 927.4 536.5 917.9 544.1C909.2 551 906.5 551.5 897.1 557.5C888.8 562.7 887.4 564.7 878.5 569C869.2 573.6 857.1 577.2 857.1 577.2C857.1 577.2 857.3 578.7 857.3 578.7C857.3 578.7 869.7 575.5 879.3 571.4C888.5 567.5 890.3 565.9 899 561C909 555.4 911.8 554.9 921 548C931.1 540.4 933.7 538.8 941.7 529C948.2 521 948.6 518.4 952.7 509C956.9 499.4 957.5 497.1 960 487C962.4 477.3 962.7 475 963.7 465C965 452 965.6 449.1 965.2 436C964.8 422.2 964.4 419 961.9 405.4C959.6 392.6 958.6 389.8 954.5 377.4C950.2 364.5 950.2 361 943.2 349.4C937.4 339.7 926.4 330.7 926.4 330.7C926.4 330.7 922 322 922 322Z" fill="#44a0ff" />
<polygon points="907.8,233.6 894.7,274.7 907.8,328.9 917.1,315.8 905,272.8 908.7,234.5" fill="#44a0ff" />
<polygon points="862.2,300 863,295 868.5,281 876,268 871.5,288 867,302 884,372 879.8,371.8" fill="#3d96fb" />
<path d="M911.5 428.6C911.5 428.6 916.2 445.9 916.2 460.3C916.2 476.4 915.6 480.2 911.5 495.8C907.5 510.7 906.3 514.3 898.4 527.5C891 539.8 888.1 541.8 877.9 551.8C871.2 558.4 861 564 861 564C861 564 853.6 579.8 853.6 579.8" fill="none" stroke="#4aa6ff" stroke-width="2.2"/>
<defs><linearGradient id="gp1" gradientUnits="userSpaceOnUse" x1="712.7" y1="639.1" x2="793.1" y2="660.1"><stop offset="0" stop-color="#43a0ff"/><stop offset=".05" stop-color="#54b2ff"/><stop offset=".18" stop-color="#48a4ff"/><stop offset=".45" stop-color="#3f96f8"/><stop offset=".72" stop-color="#3a8cec"/><stop offset=".9" stop-color="#3079d0"/><stop offset="1" stop-color="#2760a6"/></linearGradient><radialGradient id="gq1" gradientUnits="userSpaceOnUse" cx="762.1" cy="641.4" r="39.2"><stop offset="0" stop-color="#2e77c9"/><stop offset=".9" stop-color="#2e77c9"/><stop offset="1" stop-color="#2e77c9" stop-opacity="0"/></radialGradient></defs><path d="M731.2 618.5A38.2 38.2 0 0 1 790 667.3L780.3 679A38.2 38.2 0 0 1 721.5 630.2Z" fill="url(#gp1)"/><circle cx="762.1" cy="641.4" r="39.2" fill="url(#gq1)"/><path d="M723 639.1A38.2 38.2 0 0 1 795 626.9" fill="none" stroke="#58aaf2" stroke-width="1.1" opacity=".9"/>
<defs><linearGradient id="gp2" gradientUnits="userSpaceOnUse" x1="893.2" y1="621.3" x2="973.6" y2="642.3"><stop offset="0" stop-color="#43a0ff"/><stop offset=".05" stop-color="#54b2ff"/><stop offset=".18" stop-color="#48a4ff"/><stop offset=".45" stop-color="#3f96f8"/><stop offset=".72" stop-color="#3a8cec"/><stop offset=".9" stop-color="#3079d0"/><stop offset="1" stop-color="#2760a6"/></linearGradient><radialGradient id="gq2" gradientUnits="userSpaceOnUse" cx="942.9" cy="623.6" r="39.2"><stop offset="0" stop-color="#2e77c9"/><stop offset=".9" stop-color="#2e77c9"/><stop offset="1" stop-color="#2e77c9" stop-opacity="0"/></radialGradient></defs><path d="M911.1 601.8A38.2 38.2 0 0 1 971.7 648.4L961.7 661.4A38.2 38.2 0 0 1 901.1 614.8Z" fill="url(#gp2)"/><circle cx="942.9" cy="623.6" r="39.2" fill="url(#gq2)"/><path d="M903.8 621.3A38.2 38.2 0 0 1 975.8 609.1" fill="none" stroke="#58aaf2" stroke-width="1.1" opacity=".9"/>
<ellipse cx="855" cy="706.7" rx="25.1" ry="23.6" fill="url(#gSm)"/>
<path d="M965.7 878 V850.8 L964.3 839.8 L966.3 838.8 L969.9 846.2 L971.7 850.8 V878 Q968.7 880 965.7 878Z" fill="url(#gp)"/><circle cx="965.4" cy="839.4" r="1.3" fill="#2fc49a"/>
<path d="M932.6 883 V858 L931.2 846 L933.2 845 L937.1 853.1 L939.1 858 V883 Q935.9 885 932.6 883Z" fill="url(#gp)"/><circle cx="932.3" cy="845.6" r="1.3" fill="#2fc49a"/>
<path d="M673 883 V854 L671.6 845 L673.6 844 L676.5 850.2 L678 854 V883 Q675.5 885 673 883Z" fill="url(#gp)"/><circle cx="672.8" cy="844.6" r="1.3" fill="#35c84a"/>
<path d="M920 886 V858 L918.6 846 L920.6 845 L924.5 853.1 L926.5 858 V886 Q923.2 888 920 886Z" fill="url(#gp)"/><circle cx="919.7" cy="845.6" r="1.3" fill="#e63ad0"/>
<path d="M956.8 886 V855 L955.3 841 L957.3 840 L962 849.3 L964.3 855 V886 Q960.5 888 956.8 886Z" fill="url(#gp)"/><circle cx="956.4" cy="840.6" r="1.3" fill="#e63ad0"/>
<path d="M902 888 V831.7 L900.6 820.7 L902.6 819.7 L906.2 827.1 L908 831.7 V888 Q905 890 902 888Z" fill="url(#gp)"/><circle cx="901.7" cy="820.3" r="1.3" fill="#35c84a"/>
<path d="M898 888 V857.7 L896.6 848.7 L898.6 847.7 L901.5 853.9 L903 857.7 V888 Q900.5 890 898 888Z" fill="url(#gp)"/><circle cx="897.8" cy="848.3" r="1.3" fill="#2fc49a"/>
<path d="M827 891 V866 L825.6 855 L827.6 854 L831.2 861.4 L833 866 V891 Q830 893 827 891Z" fill="url(#gp)"/><circle cx="826.7" cy="854.6" r="1.3" fill="#2fc49a"/>
<path d="M860 891 V865.5 L858.5 852.5 L860.5 851.5 L864.9 860.2 L867 865.5 V891 Q863.5 893 860 891Z" fill="url(#gp)"/><circle cx="859.6" cy="852.1" r="1.3" fill="#2fc49a"/>
<path d="M884 893.5 V861.7 L882.5 848.7 L884.5 847.7 L888.9 856.4 L891 861.7 V893.5 Q887.5 895.5 884 893.5Z" fill="url(#gp)"/><circle cx="883.6" cy="848.3" r="1.3" fill="#e63ad0"/>
<path d="M988.6 893.5 V819 L987.2 808 L989.2 807 L992.8 814.4 L994.6 819 V893.5 Q991.6 895.5 988.6 893.5Z" fill="url(#gp)"/><circle cx="988.3" cy="807.6" r="1.3" fill="#35c84a"/>
<path d="M850 896 V862 L848.6 851 L850.6 850 L854.2 857.4 L856 862 V896 Q853 898 850 896Z" fill="url(#gp)"/><circle cx="849.7" cy="850.6" r="1.3" fill="#e63ad0"/>
<path d="M1000 896 V807.5 L998.6 796.5 L1000.6 795.5 L1004.2 802.9 L1006 807.5 V896 Q1003 898 1000 896Z" fill="url(#gp)"/><circle cx="999.7" cy="796.1" r="1.3" fill="#35c84a"/>
<path d="M993.7 898.6 V805.4 L992.2 791.4 L994.2 790.4 L999 799.7 L1001.2 805.4 V898.6 Q997.5 900.6 993.7 898.6Z" fill="url(#gp)"/><circle cx="993.3" cy="791" r="1.3" fill="#35c84a"/>
<path d="M704.8 898.6 V875 L703.4 864 L705.4 863 L709 870.4 L710.8 875 V898.6 Q707.8 900.6 704.8 898.6Z" fill="url(#gp)"/>
<path d="M729 901 V875.5 L727.6 866.5 L729.6 865.5 L732.5 871.7 L734 875.5 V901 Q731.5 903 729 901Z" fill="url(#gp)"/><circle cx="728.8" cy="866.1" r="1.3" fill="#2fc49a"/>
<path d="M781 901 V874 L779.5 860 L781.5 859 L786.2 868.3 L788.5 874 V901 Q784.8 903 781 901Z" fill="url(#gp)"/><circle cx="780.6" cy="859.6" r="1.3" fill="#e63ad0"/>
<path d="M892 901 V845 L890.5 831 L892.5 830 L897.2 839.3 L899.5 845 V901 Q895.8 903 892 901Z" fill="url(#gp)"/><circle cx="891.6" cy="830.6" r="1.3" fill="#35c84a"/>
<path d="M1010.3 901 V795.7 L1008.7 778.7 L1010.7 777.7 L1016.6 788.9 L1019.3 795.7 V901 Q1014.8 903 1010.3 901Z" fill="url(#gp)"/><circle cx="1009.8" cy="778.3" r="1.3" fill="#35c84a"/>
<path d="M692 901 V880 L690.6 869 L692.6 868 L696.2 875.4 L698 880 V901 Q695 903 692 901Z" fill="url(#gp)"/>
<path d="M727.8 901 V875.5 L726.4 866.5 L728.4 865.5 L731.3 871.7 L732.8 875.5 V901 Q730.3 903 727.8 901Z" fill="url(#gp)"/><circle cx="727.5" cy="866.1" r="1.3" fill="#2fc49a"/>
<path d="M815.5 903.7 V839.8 L814 825.8 L816 824.8 L820.8 834.1 L823 839.8 V903.7 Q819.2 905.7 815.5 903.7Z" fill="url(#gp)"/><circle cx="815.1" cy="825.4" r="1.3" fill="#35c84a"/>
<path d="M743 904 V840 L741.6 831 L743.6 830 L746.5 836.2 L748 840 V904 Q745.5 906 743 904Z" fill="url(#gp)"/><circle cx="742.8" cy="830.6" r="1.3" fill="#35c84a"/>
<path d="M842.2 906 V827.5 L840.6 810.5 L842.6 809.5 L848.5 820.7 L851.2 827.5 V906 Q846.7 908 842.2 906Z" fill="url(#gp)"/><circle cx="841.8" cy="810.1" r="1.3" fill="#35c84a"/>
<path d="M721.4 906 V871 L720 860 L722 859 L725.6 866.4 L727.4 871 V906 Q724.4 908 721.4 906Z" fill="url(#gp)"/><circle cx="721.1" cy="859.6" r="1.3" fill="#e63ad0"/>
<path d="M722.5 909 V871 L721.1 860 L723.1 859 L726.7 866.4 L728.5 871 V909 Q725.5 911 722.5 909Z" fill="url(#gp)"/><circle cx="722.2" cy="859.6" r="1.3" fill="#e63ad0"/>
<path d="M793.8 909 V856 L792.3 842 L794.3 841 L799 850.3 L801.3 856 V909 Q797.5 911 793.8 909Z" fill="url(#gp)"/><circle cx="793.4" cy="841.6" r="1.3" fill="#e63ad0"/>
<path d="M908.4 910 V815.5 L906.8 796.5 L908.8 795.5 L915.4 807.9 L918.4 815.5 V910 Q913.4 912 908.4 910Z" fill="url(#gp)"/><circle cx="907.9" cy="796.1" r="1.3" fill="#35c84a"/>
<path d="M763.3 911 V860 L761.8 846 L763.8 845 L768.5 854.3 L770.8 860 V911 Q767 913 763.3 911Z" fill="url(#gp)"/><circle cx="762.9" cy="845.6" r="1.3" fill="#e63ad0"/>
<path d="M739 916 V870 L737.6 859 L739.6 858 L743.2 865.4 L745 870 V916 Q742 918 739 916Z" fill="url(#gp)"/><circle cx="738.7" cy="858.6" r="1.3" fill="#e63ad0"/>
<path d="M746.7 919 V826 L745.3 814 L747.3 813 L751.2 821.1 L753.2 826 V919 Q750 921 746.7 919Z" fill="url(#gp)"/><circle cx="746.4" cy="813.6" r="1.3" fill="#35c84a"/>
<path d="M754.4 924 V822.4 L752.8 805.4 L754.8 804.4 L760.7 815.6 L763.4 822.4 V924 Q758.9 926 754.4 924Z" fill="url(#gp)"/><circle cx="753.9" cy="805" r="1.3" fill="#35c84a"/>
<path d="M445.5 232L930.2 187M930.2 187L1134.5 330M1134.5 330L649.5 377.3M649.5 377.3L445.5 232M445.5 822.2L930.2 777.4M930.2 777.4L1134.5 922.3M1134.5 922.3L649.5 967.4M649.5 967.4L445.5 822.2M445.5 232L445.5 822.2M930.2 187L930.2 777.4M1134.5 330L1134.5 922.3M649.5 377.3L649.5 967.4" fill="none" stroke="#4fa3dc" stroke-width="1" stroke-opacity=".85"/>
<path d="M762.5 498.5 Q728 514 710.5 557" fill="none" stroke="#1d2a3a" stroke-width="3.5999999999999996" stroke-linecap="round" stroke-opacity=".75"/><path d="M762.5 498.5 Q728 514 710.5 557" fill="none" stroke="#1f9b2f" stroke-width="2.4" stroke-linecap="round"/>
<path d="M800 502 Q814 536 819 570" fill="none" stroke="#1d2a3a" stroke-width="3.5999999999999996" stroke-linecap="round" stroke-opacity=".75"/><path d="M800 502 Q814 536 819 570" fill="none" stroke="#ee4f1c" stroke-width="2.4" stroke-linecap="round"/>
<path d="M747 580.8 L688 586.5" fill="none" stroke="#1d2a3a" stroke-width="2.9" stroke-linecap="round" stroke-opacity=".75"/><path d="M747 580.8 L688 586.5" fill="none" stroke="#ee4f1c" stroke-width="1.7" stroke-linecap="round"/>
<path d="M680.8 587.3 L689.5 583.3 L690 590 Z" fill="#ee4f1c" stroke="#7a2a10" stroke-width=".6"/>
<path d="M719.5 592 Q752 600.5 792 600.3" fill="none" stroke="#16325c" stroke-width="3.2" stroke-linecap="round"/><path d="M719.5 592 Q752 600.5 792 600.3" fill="none" stroke="#2d6fc0" stroke-width="1.2" stroke-linecap="round"/>
<path d="M789.7 601 V657" stroke="#4a4f57" stroke-width="3.4" stroke-dasharray="7.5 4.5" stroke-opacity=".7"/><path d="M789.7 601.6 V657" stroke="#e9ebee" stroke-width="2" stroke-dasharray="6.3 5.7"/>
<path d="M782 657 H794 L798 661 V672.5 H786 L782 668.5Z" fill="#fafafa" stroke="#555" stroke-width=".6"/><path d="M785.5 660.5 L794.5 669.5 M785.5 664.5 V660.5 H789.5 M794.5 665.5 V669.5 H790.5" fill="none" stroke="#111" stroke-width="1.5"/>
<path d="M806 588.6 L827 604.2" fill="none" stroke="#1d2a3a" stroke-width="3.4000000000000004" stroke-linecap="round" stroke-opacity=".75"/><path d="M806 588.6 L827 604.2" fill="none" stroke="#1f9b2f" stroke-width="2.2" stroke-linecap="round"/>
<circle cx="828" cy="604.8" r="3.9" fill="#1f9b2f" stroke="#14501c" stroke-width=".7"/>
<circle cx="790" cy="577.5" r="9.6" fill="#f3f4f5" stroke="#4a4f57" stroke-width="1.1"/><g fill="none" stroke="#333" stroke-width="1.1"><ellipse cx="790" cy="574.3" rx="2" ry="2.8"/><ellipse cx="790" cy="580.7" rx="2" ry="2.8"/><ellipse cx="786.8" cy="577.5" rx="2.8" ry="2"/><ellipse cx="793.2" cy="577.5" rx="2.8" ry="2"/></g>
</svg>
<div id="hdr">
 <div class="tab"></div>
 <svg style="position:absolute;left:0;top:0" width="42" height="41" viewBox="0 0 42 41" fill="none" stroke="#fff" stroke-width="1.15" stroke-linejoin="round">
  <path d="M8 14.5 L11.1 12.2 L20.4 18.3 L12.2 24.8 Z"/><path d="M9.6 15.2 L19.2 19.4" stroke-width=".8"/>
  <path d="M11.5 24.6 L15.5 22.3 L19 20.6 L16.4 28.6 Z"/><path d="M13.7 23.7 L15.2 25.3 L17.9 22.2" stroke-width="1"/>
  <path d="M21.2 18.3 L30.2 12.7 L33.2 14.2 L28.6 22.2 L22.2 19.5 Z" stroke-width="1.5"/>
  <path d="M20.8 19.7 L29.6 24.1 L25.2 28.8 Z" fill="#fff"/>
 </svg>
 <svg style="position:absolute;left:57px;top:9px" width="20" height="24" viewBox="0 0 20 24" fill="none" stroke="#fff" stroke-width="1.4" stroke-linejoin="round">
  <path d="M2.2 6.4 L10.6 2.2 L17.8 5.2 L17.8 17.6 L9 21.6 L2.2 17.4 Z"/><path d="M2.2 6.4 L9 9.6 L17.8 5.2"/><path d="M9 9.6 L9 21.6"/><path d="M10.6 2.2 L10.6 13.6"/><path d="M9.4 18 L9.4 21 L16.8 17.4 L16.8 14.6 Z" fill="#fff" stroke="none"/><path d="M5 14.5 L8.6 16.4 L8.6 20.4 L5 18.2Z" fill="#cfd6e2" stroke="none"/>
 </svg>
 <div class="t" style="left:85px">PreForm</div>
 <svg style="position:absolute;left:160px;top:11px" width="26" height="19" viewBox="0 0 26 19" fill="none" stroke="#e4e6e9" stroke-width="1.25" stroke-linecap="round">
  <path d="M6 17.2 C3.4 17.2 2.2 15.4 2.2 13.8 C2.2 11.8 3.8 10.4 5.8 10.6 C6 7.6 8.2 5.6 11 5.6 C13.6 5.6 15.4 7.2 16 9.6 C18.4 9.4 20 11 20 13.2 C20 15.4 18.6 17.2 16.4 17.2 Z"/>
  <path d="M16.4 5.8 c1.6.3 2.7 1.4 3.1 3"/><path d="M17 3.6 c2.6.5 4.3 2.2 4.8 4.8"/><path d="M17.6 1.4 c3.6.7 6 3.1 6.6 6.7"/>
 </svg>
 <div class="t" style="left:190px">Dashboard</div>
 <div class="t" style="left:1050px">Spannzange</div>
 <svg style="position:absolute;left:1127px;top:14px" width="14" height="14" viewBox="0 0 14 14"><path d="M1.4 12.6 L2.2 9.6 L9 2.8 L11.2 5 L4.4 11.8 Z M9.8 2 L10.8 1 Q11.4 .6 12 1.2 L12.8 2 Q13.3 2.6 12.8 3.2 L12 4.2Z" fill="#fff"/></svg>
</div>
<div class="tb" style="top:49px;height:43px"><svg class="ti" style="top:4.5px" width="42" height="24" viewBox="0 0 42 24"><path d="M11.6 16.8 L25.1 6.8 L27.9 10.6 L14.4 20.6 Z" fill="#2f3641"/><path d="M22.5 10.2 L24.3 8.8 L25.6 10.5 L23.8 11.9Z" fill="#fff"/><g stroke="#2f3641" stroke-width="1.1" stroke-linecap="round"><path d="M16.8 3.4 l3 3 M19.8 3.4 l-3 3"/><path d="M27.2 3.4 l3 3 M30.2 3.4 l-3 3"/><path d="M27.2 13.9 l3 3 M30.2 13.9 l-3 3"/></g></svg><div class="tl" style="top:30px">1-Click</div></div>
<div class="tb" style="top:99px;height:173px"><svg class="ti" style="top:4.5px" width="42" height="24" viewBox="0 0 42 24"><rect x="12.8" y="5.8" width="16.6" height="12.6" fill="none" stroke="#2f3641" stroke-width="1.5" stroke-dasharray="1.5 1.52"/><rect x="12" y="14.3" width="8.2" height="4.9" fill="#2f3641"/></svg><div class="tl" style="top:30px">Size</div><svg class="ti" style="top:49px" width="42" height="24" viewBox="0 0 42 24"><path d="M11.9 12 L18.8 5.7 L24.8 11.5 L18.4 17.5 Z" fill="#2f3641"/><path d="M22.75 5.1 A7 7 0 1 1 20.3 18.2" fill="none" stroke="#2f3641" stroke-width="1.7"/><path d="M19.3 5.1 L23.2 2.4 L23.2 7.8 Z" fill="#2f3641"/></svg><div class="tl" style="top:73.5px">Orient</div><svg class="ti" style="top:91px" width="42" height="24" viewBox="0 0 42 24"><path d="M15 8.3 L17.4 4.1 L26.3 8.6 L24 12.8 Z" fill="#2f3641"/><path d="M13 18.4 H29.4" stroke="#2f3641" stroke-width="1.5"/><path d="M16 9.5 V18 M23.6 12 V18 M23.6 13.4 Q27.8 12 27.8 15.2 V18" fill="none" stroke="#2f3641" stroke-width="1.5"/></svg><div class="tl" style="top:116.5px">Support</div><svg class="ti" style="top:134px" width="42" height="24" viewBox="0 0 42 24"><g fill="#2f3641"><rect x="12" y="2.5" width="8" height="10.5"/><rect x="21.5" y="2.5" width="8.5" height="5.6"/><rect x="12" y="14.5" width="8" height="7"/><rect x="21.5" y="9.6" width="8.5" height="11.9"/></g></svg><div class="tl" style="top:159.5px">Layout</div></div>
<div class="tb" style="top:279px;height:172px"><svg class="ti" style="top:5px" width="42" height="24" viewBox="0 0 42 24"><path d="M12 7.5 V16.5 C12 18.9 16 20.6 21 20.6 C26 20.6 30 18.9 30 16.5 V7.5 Z" fill="#2f3641"/><ellipse cx="21" cy="7.5" rx="9" ry="4" fill="#2f3641"/><ellipse cx="21" cy="7.3" rx="6.2" ry="2.2" fill="none" stroke="#fff" stroke-width="1.3"/><ellipse cx="21" cy="7.5" rx="3" ry=".7" fill="#fff"/></svg><div class="tl" style="top:30px">Hollow</div><svg class="ti" style="top:47.5px" width="42" height="24" viewBox="0 0 42 24"><path d="M13.2 3.3 V20.8" stroke="#2f3641" stroke-width="1.6"/><path d="M16.3 3.3 V20.8" stroke="#2f3641" stroke-width="1.6"/><path d="M19.4 3.3 V20.8" stroke="#2f3641" stroke-width="1.6"/><path d="M22.5 3.3 V20.8" stroke="#2f3641" stroke-width="1.6"/><path d="M25.6 3.3 V20.8" stroke="#2f3641" stroke-width="1.6"/><path d="M28.7 3.3 V20.8" stroke="#2f3641" stroke-width="1.6"/><path d="M12 4.4 H30" stroke="#2f3641" stroke-width="1.6"/><path d="M12 7.5 H30" stroke="#2f3641" stroke-width="1.6"/><path d="M12 10.5 H30" stroke="#2f3641" stroke-width="1.6"/><path d="M12 13.5 H30" stroke="#2f3641" stroke-width="1.6"/><path d="M12 16.6 H30" stroke="#2f3641" stroke-width="1.6"/><path d="M12 19.6 H30" stroke="#2f3641" stroke-width="1.6"/></svg><div class="tl" style="top:73px">Texture</div><svg class="ti" style="top:90px" width="42" height="24" viewBox="0 0 42 24"><text x="21" y="16.5" text-anchor="middle" font-family="Liberation Sans,sans-serif" font-weight="bold" font-size="13" fill="#2f3641">Aa</text></svg><div class="tl" style="top:116px">Label</div><svg class="ti" style="top:133.5px" width="42" height="24" viewBox="0 0 42 24"><path d="M12.5 7.4 L21.5 3 L30 6.6 V16.8 L20.5 21.5 L12.5 17.8 Z" fill="#2f3641"/><path d="M20.3 10.5 L29.6 6.8" stroke="#fff" stroke-width=".5" opacity=".0"/><path d="M14.6 10.2 L18.2 11.8 V18 L14.6 16.4 Z" fill="#fff"/><path d="M16.2 11.7 L18.2 12.6 V17.2 L16.2 16.3Z" fill="#2f3641" opacity=".55"/></svg><div class="tl" style="top:159px">Hole</div></div><div id="sum"><div class="h">Summary</div><svg style="position:absolute;left:80px;top:12px" width="15" height="15" viewBox="0 0 15 15"><circle cx="7.5" cy="7.5" r="5.8" fill="none" stroke="#4b525e" stroke-width="1"/><path d="M7.5 6.6 V10.6 M7.5 4.3 V5.5" stroke="#4b525e" stroke-width="1.2"/></svg><svg style="position:absolute;left:243px;top:13px" width="13" height="13" viewBox="0 0 13 13"><rect x="1.5" y="1.8" width="9.5" height="9" rx="1" fill="none" stroke="#4b525e" stroke-width="1.2"/><rect x="6.5" y="1.8" width="4.5" height="9" fill="#4b525e"/></svg><svg style="position:absolute;left:268px;top:12px" width="14" height="14" viewBox="0 0 14 14"><path d="M2 8.5 H5.5 V11.5 M7 5 H12.5 M9.5 2 V5" fill="none" stroke="#4b525e" stroke-width="1.1"/></svg><div style="position:absolute;left:19.5px;top:85px;width:1px;height:54px;background:#d3d6db"></div><div class="r" style="top:38px"><svg class="ic" viewBox="0 0 16 16"><circle cx="8" cy="8" r="6.1" fill="#4b525e"/><path d="M8 4 V8.3 L11 9.8" fill="none" stroke="#f4f5f6" stroke-width="1.4"/></svg><span class="l">Total Print Time</span><span class="v" style="right:13px">4 h 3 m</span></div><div class="r" style="top:59.5px"><svg class="ic" viewBox="0 0 16 16"><path d="M1 9 L8 12.5 L15 9 L8 5.5Z" fill="#4b525e"/><path d="M1.5 11.8 L8 15 L14.5 11.8" fill="none" stroke="#4b525e" stroke-width="1.4"/><path d="M9.5 .5 C11 2.5 12.3 4 12.3 5.6 A2.8 2.8 0 0 1 6.7 5.6 C6.7 4 8 2.5 9.5 .5Z" fill="#4b525e" stroke="#f4f5f6" stroke-width=".9"/></svg><span class="l">Volume</span><span class="v" style="right:30px">46.04 mL</span></div><div class="r" style="top:81px"><span class="l2">Model(s)</span><span class="v" style="right:30px">34.98 mL</span></div><div class="r" style="top:102.5px"><span class="l2">Supports</span><span class="v" style="right:30px">5.48 mL</span></div><div class="r" style="top:124px"><span class="l2">Raft</span><span class="v" style="right:30px">5.57 mL</span></div><div class="r" style="top:145.5px"><svg class="ic" viewBox="0 0 16 16"><path d="M3 2 L7.5 7 V13 H10" fill="none" stroke="#4b525e" stroke-width="1.5"/><path d="M7.5 13 H11" stroke="#c5c9cf" stroke-width="1.5"/></svg><span class="l">Touchpoints</span><span class="v" style="right:30px">84</span></div><div class="r" style="top:167px"><svg class="ic" viewBox="0 0 16 16"><path d="M1 7 L8 10.8 L15 7 L8 3.2Z" fill="#4b525e"/><path d="M1.5 10.2 L8 13.8 L14.5 10.2" fill="none" stroke="#4b525e" stroke-width="1.4"/></svg><span class="l">Layers</span><span class="v" style="right:30px">766</span></div><svg style="position:absolute;left:272px;top:66px" width="9" height="7" viewBox="0 0 9 7"><path d="M.8 1.2 H8.2 L4.5 5.8Z" fill="#111"/></svg></div><svg id="ann" viewBox="0 0 1178 1200"><defs><filter id="sh" x="-10%" y="-10%" width="120%" height="120%"><feGaussianBlur stdDeviation="0.8"/></filter></defs><g fill="none" stroke="#4a4a4a" stroke-opacity=".75" stroke-width="2.2" filter="url(#sh)" transform="translate(1.3,1.6)"><ellipse cx="34.2" cy="255" rx="34.8" ry="224"/><ellipse cx="167.3" cy="1100.8" rx="166.3" ry="119.6" transform="rotate(3 167.3 1100.8)"/></g><g fill="none" stroke="#f00808" stroke-width="2"><ellipse cx="34.2" cy="255" rx="34.8" ry="224"/><ellipse cx="167.3" cy="1100.8" rx="166.3" ry="119.6" transform="rotate(3 167.3 1100.8)"/></g><path d="M1100.8 393.1 V407.6 L1104 404.8 L1106.3 410 L1108.5 409 L1106.2 404 L1111 403.4 Z" fill="#111" stroke="#fff" stroke-width=".8"/></svg></body></html>
